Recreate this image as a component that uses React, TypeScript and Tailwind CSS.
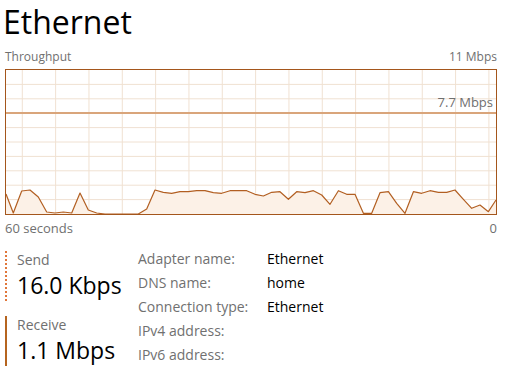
import React from 'react';

const FONT = "font-['Open_Sans','Noto_Sans',sans-serif]";

// sampled y positions (page coords) of the receive line, 60 points, left to right
const samples = [
  194, 213, 191, 190, 197, 212, 213, 212, 213, 193,
  210, 213, 214, 214, 214, 214, 214, 209, 190, 192.3,
  193.3, 191.7, 191.7, 190.7, 190.7, 192.7, 193.3, 190.7, 190.7, 190.7,
  194.3, 196, 192.3, 191.7, 199.3, 191.7, 192.7, 190.7, 195, 204.3,
  190.7, 194.3, 194.3, 213.3, 213.3, 192.7, 191.7, 203.3, 213.3, 191.7,
  193.3, 190.7, 192.3, 192.3, 190, 199.3, 208.3, 205, 211.7, 200,
];

const W = 490;
const H = 144;

function Chart() {
  const pts = samples.map((y, i) => [Math.min(W, Math.max(0, -1 + (i * 491.7) / 59)), y - 70]);
  const line = pts.map(([x, y]) => `${x.toFixed(1)},${y.toFixed(1)}`).join(' ');
  const area = `0,${H} ${line} ${W},${H}`;
  const vlines = Array.from({ length: 15 }, (_, k) => 16.3 + k * 33.33);
  const hlines = Array.from({ length: 9 }, (_, k) => (k + 1) * 14.4);

  return (
    <div className="relative ml-[5px] w-[492px] h-[146px] border border-[#a4561c]">
      <svg width={W} height={H} className="block">
        {vlines.map((x) => (
          <line key={'v' + x} x1={x} x2={x} y1={0} y2={H} stroke="#f0e1d2" strokeWidth={1} />
        ))}
        {hlines.map((y) => (
          <line key={'h' + y} x1={0} x2={W} y1={y} y2={y} stroke="#f0e1d2" strokeWidth={1} />
        ))}
        <polygon points={area} fill="#fcf1e7" />
        <line x1={0} x2={W} y1={43} y2={43} stroke="#d9a57b" strokeWidth={2} />
        <polyline points={line} fill="none" stroke="#b25f22" strokeWidth={1.2} strokeLinejoin="round" />
      </svg>
      <div className="absolute right-[3px] top-[24px] text-[13px] leading-[16px] text-[#6f6f6f]">7.7 Mbps</div>
    </div>
  );
}

function Stat({ label, value, dotted }: { label: string; value: string; dotted?: boolean }) {
  return (
    <div className={`ml-[5px] pl-[10px] ${dotted ? 'border-l-2 border-dotted border-[#e0763a]' : 'border-l-2 border-[#b5641f]'}`}>
      <div className="text-[14px] leading-[18px] text-[#707070]">{label}</div>
      <div className="text-[23px] leading-[32px] text-black">{value}</div>
    </div>
  );
}

const info: [string, string][] = [
  ['Adapter name:', 'Ethernet'],
  ['DNS name:', 'home'],
  ['Connection type:', 'Ethernet'],
  ['IPv4 address:', ''],
  ['IPv6 address:', ''],
];

export default function App() {
  return (
    <div className={`w-[507px] h-[369px] overflow-hidden bg-white ${FONT}`}>
      <div className="pl-[3px] text-[32px] leading-[44px] text-black">Ethernet</div>
      <div className="flex justify-between px-[5px] pt-[4px] mb-[3px] text-[12px] leading-[18px] text-[#707070]">
        <span>Throughput</span>
        <span className="pr-[5px]">11 Mbps</span>
      </div>
      <Chart />
      <div className="flex justify-between px-[5px] pt-[4px] text-[13px] leading-[18px] text-[#707070]">
        <span>60 seconds</span>
        <span className="pr-[5px]">0</span>
      </div>
      <div className="flex mt-[14px]">
        <div className="w-[138px] flex flex-col gap-[15px]">
          <Stat label="Send" value="16.0 Kbps" dotted />
          <Stat label="Receive" value="1.1 Mbps" />
        </div>
        <div className="flex flex-col -mt-[4px]">
          {info.map(([k, v]) => (
            <div key={k} className="flex text-[14px] leading-[24px]">
              <span className="w-[129px] text-[#707070]">{k}</span>
              <span className="text-black">{v}</span>
            </div>
          ))}
        </div>
      </div>
    </div>
  );
}
